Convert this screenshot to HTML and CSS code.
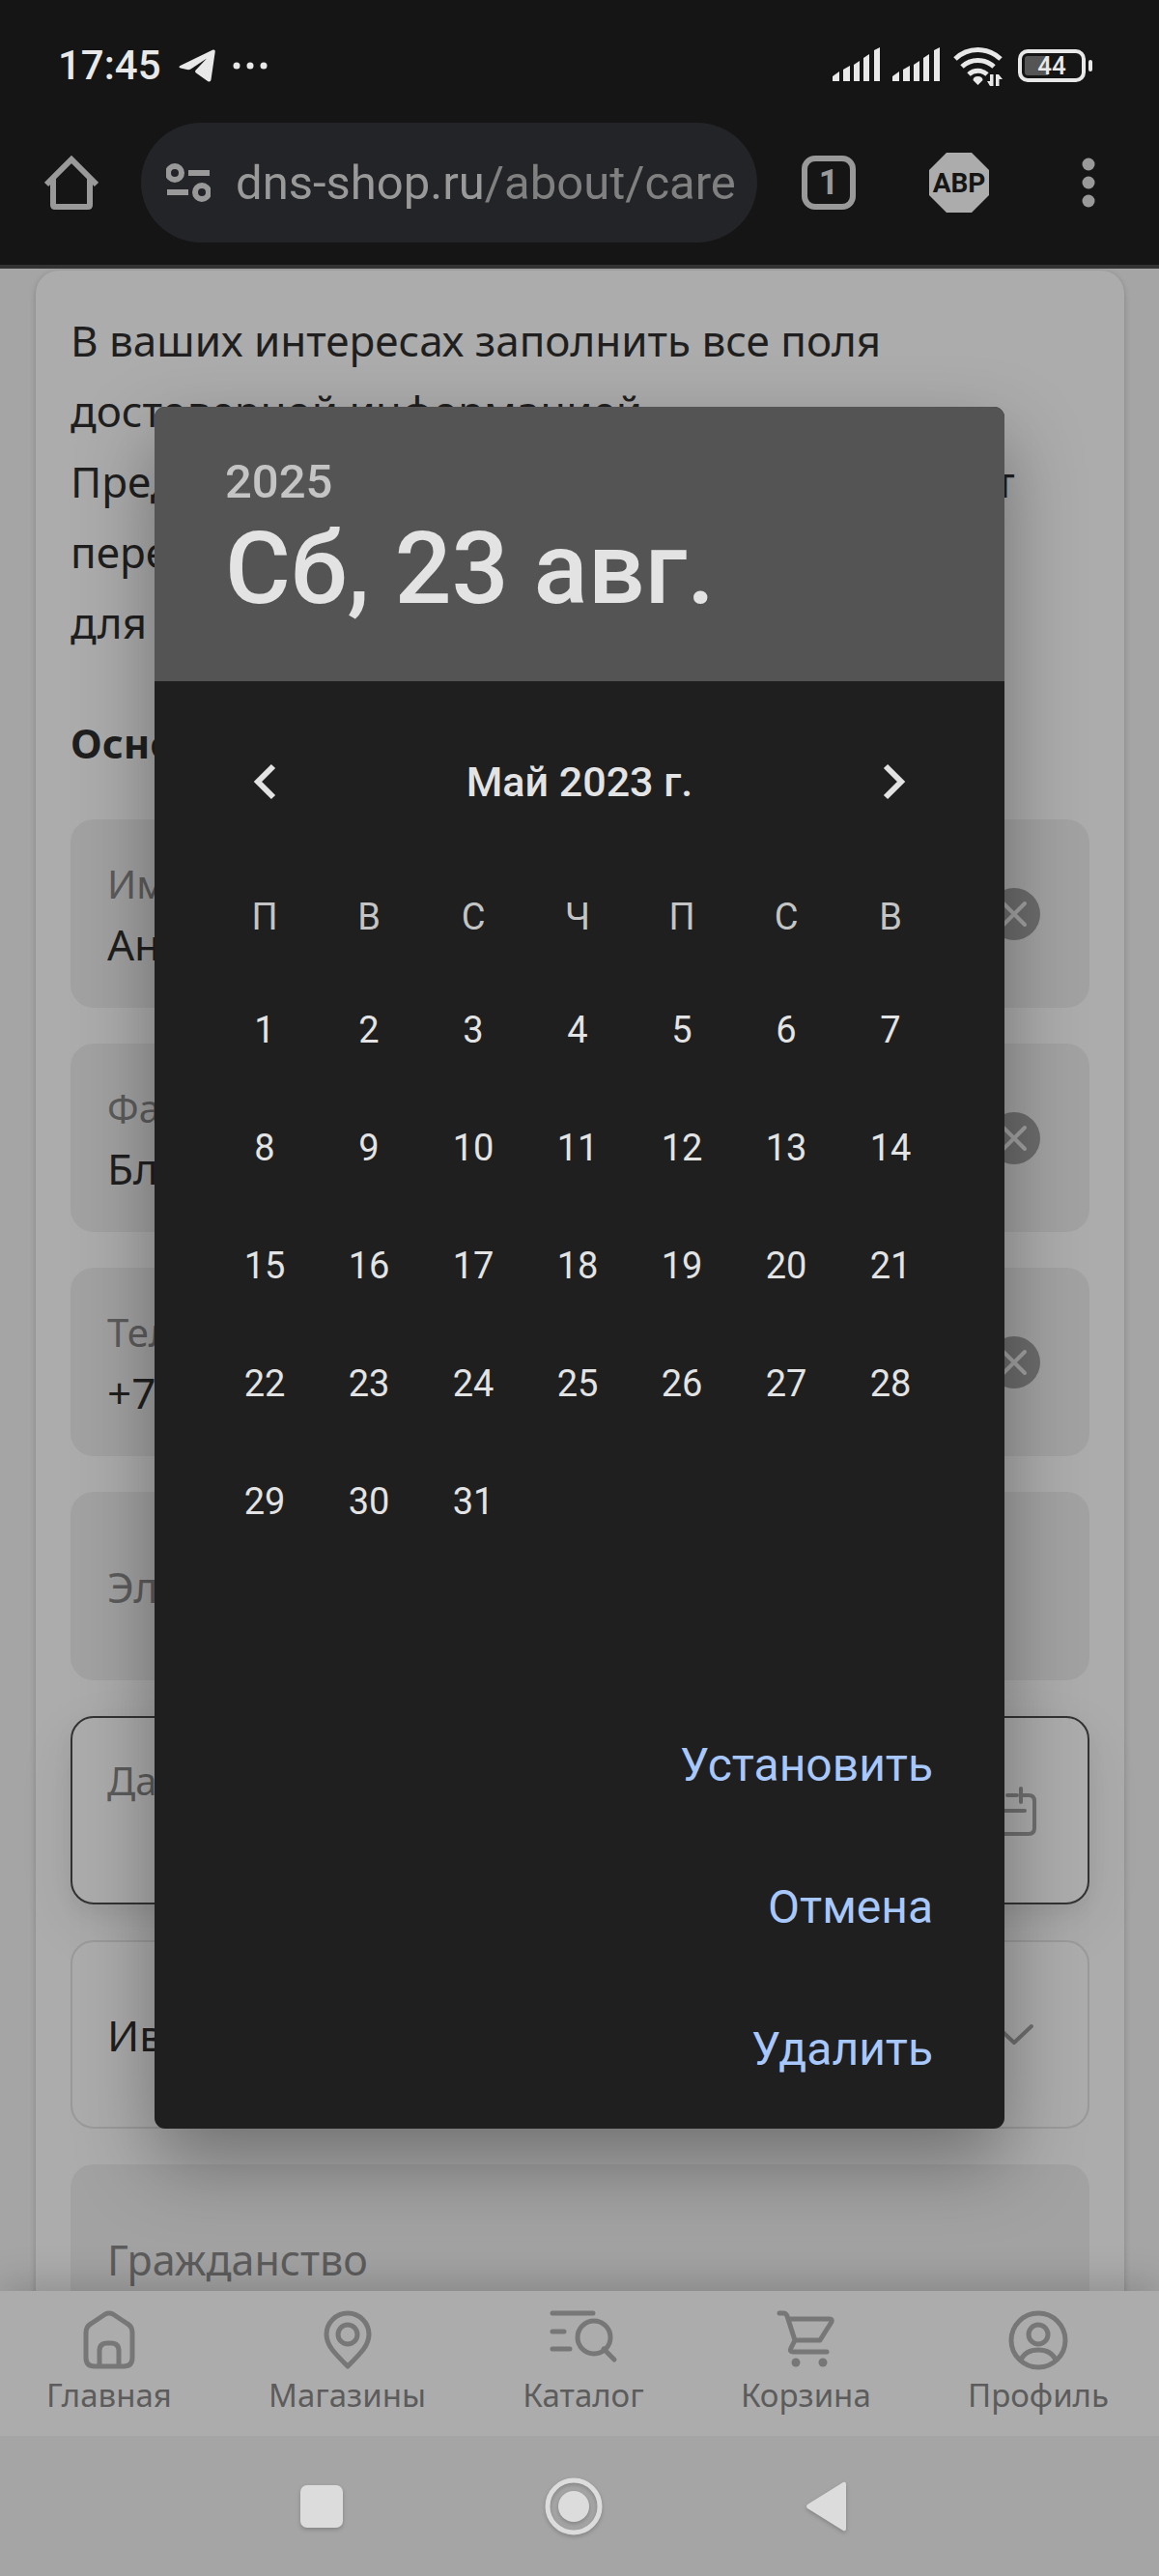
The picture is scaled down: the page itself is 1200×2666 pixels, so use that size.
FILE: index.html
```html
<!DOCTYPE html>
<html lang="ru">
<head>
    <meta charset="UTF-8">
    <meta name="viewport" content="width=device-width, initial-scale=1">
    <title>Анкета</title>
    <link rel="stylesheet" href="styles.css">
</head>
<body>

    <!-- Status bar -->
    <div class="statusbar">
        <span class="clock">17:45</span>
        <svg class="telegram" width="38" height="34" viewBox="0 0 38 34"><path d="M1.5 17 35 .8c1.800-.8 3 .2 2.700 2L33.500 31.500c-.4 2-1.800 2.500-3.500 1.400L18 24.500c-1.200-1-1.200-2 0-3.200L29 9.500 12.500 20.500c-1.500 1-3 1-5 .3L2 19.500C0 19 0 17.800 1.500 17z"/></svg>
        <svg width="36" height="8" viewBox="0 0 36 8"><circle cx="4" cy="4" r="3.500"/><circle cx="18" cy="4" r="3.500"/><circle cx="32" cy="4" r="3.500"/></svg>
        <div class="status-right">
            <svg width="50" height="38" viewBox="0 0 50 38"><path d="M0 30l7-5v10H0zM11 23l7-4v16h-7zM22 18l6-4v21h-6zM32 11l6-4v28h-6zM43 3l6-3v35h-6z"/></svg>
            <svg width="50" height="38" viewBox="0 0 50 38"><path d="M0 30l7-5v10H0zM11 23l7-4v16h-7zM22 18l6-4v21h-6zM32 11l6-4v28h-6zM43 3l6-3v35h-6z"/></svg>
            <svg class="wifi" width="54" height="44" viewBox="0 0 54 44">
                <path class="arc" d="M3 15a34 34 0 0 1 47 0M10 23a24 24 0 0 1 33 0M17 31a14 14 0 0 1 19 0"/>
                <path d="M26.500 33c3 0 5 1.500 5 4L26.500 42l-5-5c0-2.500 2-4 5-4zM39 31h3.500v12H39l-3-5h3zM45 43V31h3l4 5h-3.500v7z"/>
            </svg>
            <span class="battery">44</span>
        </div>
    </div>

    <!-- Browser toolbar -->
    <div class="toolbar">
        <button class="icon-button" aria-label="Домой">
            <svg width="56" height="56" viewBox="0 0 56 56"><path class="line" d="M2 30 28 4l26 26M9 24v27q0 2 2 2h34q2 0 2-2V24"/></svg>
        </button>
        <button class="address">
            <svg width="46" height="40" viewBox="0 0 46 40"><path class="line" d="M23 10h22M1 30h22"/><circle class="line" cx="9" cy="10" r="7"/><circle class="line" cx="37" cy="30" r="7"/></svg>
            <span>dns-shop.ru<span class="path">/about/care</span></span>
        </button>
        <button class="tabs">1</button>
        <button class="icon-button abp" aria-label="Adblock Plus">
            <svg width="62" height="62" viewBox="0 0 62 62"><path d="M18 0h26l18 18v26L44 62H18L0 44V18z"/><text x="31" y="41" text-anchor="middle">ABP</text></svg>
        </button>
        <button class="icon-button" aria-label="Меню">
            <svg width="14" height="52" viewBox="0 0 14 52"><circle cx="7" cy="7" r="6.500"/><circle cx="7" cy="26" r="6.500"/><circle cx="7" cy="45" r="6.500"/></svg>
        </button>
    </div>

    <!-- Page -->
    <main class="page">
        <form class="card">
            <p class="intro">В ваших интересах заполнить все поля<br>достоверной информацией.<br>Представленная вами информация не станет<br>передаваться третьим лицам<br>для рассылки.</p>
            <h2>Основная информация</h2>

            <div class="field">
                <label for="name">Имя</label>
                <input id="name" type="text" value="Анна">
                <button type="button" class="clear" aria-label="Очистить"><svg width="56" height="56" viewBox="0 0 56 56"><circle cx="28" cy="28" r="27"/><path d="M17 17l22 22M39 17 17 39"/></svg></button>
            </div>
            <div class="field">
                <label for="surname">Фамилия</label>
                <input id="surname" type="text" value="Блинова">
                <button type="button" class="clear" aria-label="Очистить"><svg width="56" height="56" viewBox="0 0 56 56"><circle cx="28" cy="28" r="27"/><path d="M17 17l22 22M39 17 17 39"/></svg></button>
            </div>
            <div class="field">
                <label for="phone">Телефон</label>
                <input id="phone" type="tel" value="+7">
                <button type="button" class="clear" aria-label="Очистить"><svg width="56" height="56" viewBox="0 0 56 56"><circle cx="28" cy="28" r="27"/><path d="M17 17l22 22M39 17 17 39"/></svg></button>
            </div>
            <div class="field">
                <input id="email" type="email" aria-label="Электронная почта" placeholder="Электронная почта">
            </div>
            <div class="field focused">
                <label for="birthday">Дата рождения</label>
                <input id="birthday" type="text">
                <svg class="field-icon" width="56" height="56" viewBox="0 0 56 56"><path d="M15 12H11Q5 12 5 18V46Q5 52 11 52H43Q49 52 49 46V18Q49 12 43 12H37M21 12H31M15 5V19M35 5V19M13 28H39"/></svg>
            </div>
            <div class="field outlined">
                <select id="city" aria-label="Город"><option>Иваново</option></select>
                <svg class="field-icon" width="56" height="56" viewBox="0 0 56 56"><path d="M10 19l18 17 18-17"/></svg>
            </div>
            <div class="field">
                <input id="citizenship" type="text" aria-label="Гражданство" placeholder="Гражданство">
            </div>
        </form>
    </main>

    <!-- Site navigation -->
    <nav class="bottom-nav">
        <a href="#">
            <svg width="64" height="64" viewBox="0 0 64 64"><path d="M8 24q0-6 5-9L28 5q4-2 8 0L51 15q5 3 5 9V50q0 9-9 9H17q-9 0-9-9zM22 59V43q0-8 8-8h4q8 0 8 8V59"/></svg>
            Главная
        </a>
        <a href="#">
            <svg width="64" height="64" viewBox="0 0 64 64"><path d="M32 59C18 45 10 37 10 26a22 22 0 0 1 44 0C54 37 46 45 32 59z"/><circle cx="32" cy="26" r="10"/></svg>
            Магазины
        </a>
        <a href="#">
            <svg width="72" height="64" viewBox="0 0 72 64"><path d="M4 4H46M4 23H16M4 41H22M57 41 68 52"/><circle cx="47" cy="29" r="17"/></svg>
            Каталог
        </a>
        <a href="#">
            <svg width="64" height="64" viewBox="0 0 64 64"><path d="M5 4h4q3 0 4 3l8 25h26L59 13q1-3-2-3H14M21 32l-4 8q-2 4 2 4H54"/><circle class="wheel" cx="22" cy="55" r="4.500"/><circle class="wheel" cx="50" cy="55" r="4.500"/></svg>
            Корзина
        </a>
        <a href="#">
            <svg width="64" height="64" viewBox="0 0 64 64"><circle cx="32" cy="32" r="28"/><circle cx="32" cy="26" r="10"/><path d="M14 52q5-10 18-10t18 10"/></svg>
            Профиль
        </a>
    </nav>

    <!-- System buttons -->
    <div class="system-nav">
        <button aria-label="Недавние"><svg width="64" height="64" viewBox="0 0 64 64"><rect x="10" y="10" width="44" height="44" rx="7"/></svg></button>
        <button aria-label="Домой"><svg width="64" height="64" viewBox="0 0 64 64"><circle class="ring" cx="32" cy="32" r="27"/><circle cx="32" cy="32" r="16"/></svg></button>
        <button aria-label="Назад"><svg width="64" height="64" viewBox="0 0 64 64"><path d="M13 30 50 7q3-1 3 2V55q0 3-3 2L13 34q-2-2 0-4z"/></svg></button>
    </div>

    <!-- Date picker -->
    <div class="picker" role="dialog" aria-label="Выбор даты">
        <div class="picker-head">
            <div class="year">2025</div>
            <div class="date">Сб, 23 авг.</div>
        </div>
        <div class="month">
            <button aria-label="Предыдущий месяц"><svg width="72" height="72" viewBox="0 0 72 72"><path d="M45 20 29 36l16 16"/></svg></button>
            <span>Май 2023 г.</span>
            <button aria-label="Следующий месяц"><svg width="72" height="72" viewBox="0 0 72 72"><path d="M27 20 43 36 27 52"/></svg></button>
        </div>
        <table class="days">
            <thead>
                <tr><th>П</th><th>В</th><th>С</th><th>Ч</th><th>П</th><th>С</th><th>В</th></tr>
            </thead>
            <tbody>
                <tr><td>1</td><td>2</td><td>3</td><td>4</td><td>5</td><td>6</td><td>7</td></tr>
                <tr><td>8</td><td>9</td><td>10</td><td>11</td><td>12</td><td>13</td><td>14</td></tr>
                <tr><td>15</td><td>16</td><td>17</td><td>18</td><td>19</td><td>20</td><td>21</td></tr>
                <tr><td>22</td><td>23</td><td>24</td><td>25</td><td>26</td><td>27</td><td>28</td></tr>
                <tr><td>29</td><td>30</td><td>31</td><td></td><td></td><td></td><td></td></tr>
            </tbody>
        </table>
        <div class="actions">
            <button>Установить</button>
            <button>Отмена</button>
            <button>Удалить</button>
        </div>
    </div>

</body>
</html>
```

FILE: styles.css
```css
* {
    box-sizing: border-box;
}

body {
    margin: 0;
    height: 100vh;
    display: flex;
    flex-direction: column;
    position: relative;
    overflow: hidden;
    background-color: #a5a5a5;
    color: #1f1f1f;
    font-family: "Noto Sans", sans-serif;
}

button {
    border: none;
    background: none;
    padding: 0;
    color: inherit;
    font: inherit;
    cursor: pointer;
}

svg {
    display: block;
    flex-shrink: 0;
}

/* Status bar */
.statusbar {
    display: flex;
    align-items: center;
    gap: 18px;
    height: 127px;
    padding: 8px 76px 0 60px;
    background-color: #151515;
    color: #e8e8e8;
    fill: #e8e8e8;
    font-family: Roboto, sans-serif;
}

.clock {
    font-size: 42px;
    font-weight: 500;
}

.status-right {
    display: flex;
    align-items: center;
    gap: 12px;
    margin-left: auto;
}

.wifi .arc {
    fill: none;
    stroke: #e8e8e8;
    stroke-width: 5;
}

.battery {
    position: relative;
    width: 70px;
    height: 34px;
    margin-left: 2px;
    border: 4px solid #e8e8e8;
    border-radius: 10px;
    background: linear-gradient(90deg, #555 44%, #151515 44%) padding-box;
    box-shadow: inset 0 0 0 3px #151515;
    font-size: 26px;
    font-weight: 500;
    line-height: 26px;
    text-align: center;
}

.battery::after {
    content: "";
    position: absolute;
    right: -11px;
    top: 7px;
    width: 4px;
    height: 12px;
    border-radius: 2px;
    background-color: #e8e8e8;
}

/* Toolbar */
.toolbar {
    display: flex;
    align-items: flex-start;
    height: 151px;
    padding: 0 66px 0 46px;
    background-color: #151515;
    border-bottom: 4px solid #333;
    color: #999;
    fill: #999;
    font-family: Roboto, sans-serif;
}

.icon-button {
    display: flex;
    align-items: center;
    height: 124px;
}

.line {
    fill: none;
    stroke: #999;
    stroke-width: 6;
}

.address {
    display: flex;
    flex: 1;
    align-items: center;
    gap: 26px;
    height: 124px;
    margin: 0 46px 0 44px;
    padding-left: 26px;
    border-radius: 62px;
    background-color: #232428;
    font-size: 49px;
    white-space: nowrap;
}

.path {
    color: #808080;
}

.tabs {
    width: 56px;
    height: 56px;
    margin-top: 34px;
    border: 6px solid #999;
    border-radius: 14px;
    font-size: 36px;
    font-weight: 700;
    line-height: 44px;
}

.abp {
    margin: 0 96px 0 76px;
    fill: #acacac;
}

.abp text {
    fill: #151515;
    font-size: 28px;
    font-weight: 700;
}

/* Page */
.page {
    flex: 1;
    min-height: 0;
    overflow: hidden;
    padding: 2px 36px 0 37px;
}

.card {
    display: flex;
    flex-direction: column;
    gap: 37px;
    padding: 36px;
    border-radius: 24px;
    background-color: #acacac;
    box-shadow: 0 2px 6px rgba(0, 0, 0, 0.2);
}

.intro {
    margin: 0;
    font-size: 44px;
    line-height: 73px;
}

h2 {
    margin: 20px 0 11px;
    font-size: 42px;
    line-height: 62px;
}

.field {
    position: relative;
    display: flex;
    flex-direction: column;
    justify-content: center;
    height: 195px;
    padding: 0 36px;
    border: 2px solid transparent;
    border-radius: 24px;
    background-color: #a2a2a2;
}

.field label {
    color: #5c5c5c;
    font-size: 40px;
    line-height: 62px;
}

.field input,
.field select {
    width: 100%;
    height: 62px;
    padding: 0;
    border: none;
    outline: none;
    appearance: none;
    background: none;
    color: #1f1f1f;
    font-family: inherit;
    font-size: 44px;
}

.field input::placeholder {
    color: #5c5c5c;
    font-size: 43px;
    opacity: 1;
}

.focused {
    background-color: #acacac;
    border-color: #333;
    box-shadow: 0 20px 60px rgba(0, 0, 0, 0.08), 0 8px 20px rgba(0, 0, 0, 0.06);
}

.outlined {
    background-color: #acacac;
    border-color: #9a9a9a;
}

.clear,
.field-icon {
    position: absolute;
    right: 48px;
    top: 68px;
}

.clear {
    fill: #6c6c6c;
    stroke: #a2a2a2;
    stroke-width: 4;
    stroke-linecap: round;
}

.clear circle {
    stroke: none;
}

.field-icon {
    fill: none;
    stroke: #6f6f6f;
    stroke-width: 4;
    stroke-linecap: round;
    stroke-linejoin: round;
}

/* Site navigation */
.bottom-nav {
    position: relative;
    display: flex;
    justify-content: space-between;
    height: 150px;
    padding: 19px 52px 0 48px;
    background-color: #acacac;
    box-shadow: 0 -4px 40px rgba(0, 0, 0, 0.2);
}

.bottom-nav a {
    display: flex;
    flex-direction: column;
    align-items: center;
    color: #5c5c5c;
    font-size: 33px;
    line-height: 50px;
    text-decoration: none;
}

.bottom-nav svg {
    fill: none;
    stroke: #777;
    stroke-width: 5;
    stroke-linecap: round;
    stroke-linejoin: round;
}

.bottom-nav .wheel {
    fill: #777;
    stroke: none;
}

/* System buttons */
.system-nav {
    position: relative;
    display: flex;
    align-items: center;
    justify-content: center;
    gap: 197px;
    height: 145px;
    padding-right: 12px;
    background-color: #a5a5a5;
    fill: #dcdcdc;
}

.system-nav svg {
    filter: drop-shadow(0 2px 2px rgba(0, 0, 0, 0.2));
}

.system-nav .ring {
    fill: none;
    stroke: #dcdcdc;
    stroke-width: 5;
}

/* Date picker */
.picker {
    position: absolute;
    top: 421px;
    left: 160px;
    right: 160px;
    border-radius: 11px;
    overflow: hidden;
    background-color: #1f1f1f;
    color: #e3e3e3;
    box-shadow: 0 34px 80px rgba(0, 0, 0, 0.35);
    font-family: Roboto, sans-serif;
}

.picker-head {
    padding: 48px 73px 0;
    height: 284px;
    background-color: #545454;
    font-weight: 500;
}

.year {
    color: #c4c4c4;
    font-size: 49px;
    line-height: 60px;
}

.date {
    font-size: 104px;
    line-height: 120px;
}

.month {
    display: flex;
    align-items: center;
    justify-content: space-between;
    margin: 68px 78px 64px;
    font-size: 43px;
    font-weight: 500;
}

.month svg {
    fill: none;
    stroke: #e3e3e3;
    stroke-width: 6;
}

.days {
    width: 756px;
    margin-left: 60px;
    table-layout: fixed;
    border-collapse: collapse;
    font-size: 38px;
    text-align: center;
}

.days th {
    height: 96px;
    padding: 0 0 16px;
    color: #c4c4c4;
    font-weight: 400;
}

.days td {
    height: 122px;
    padding: 0;
}

.actions {
    display: flex;
    flex-direction: column;
    align-items: flex-end;
    gap: 47px;
    padding: 162px 74px 32px;
    color: #a8c7fa;
    font-size: 48px;
    line-height: 100px;
}
```
